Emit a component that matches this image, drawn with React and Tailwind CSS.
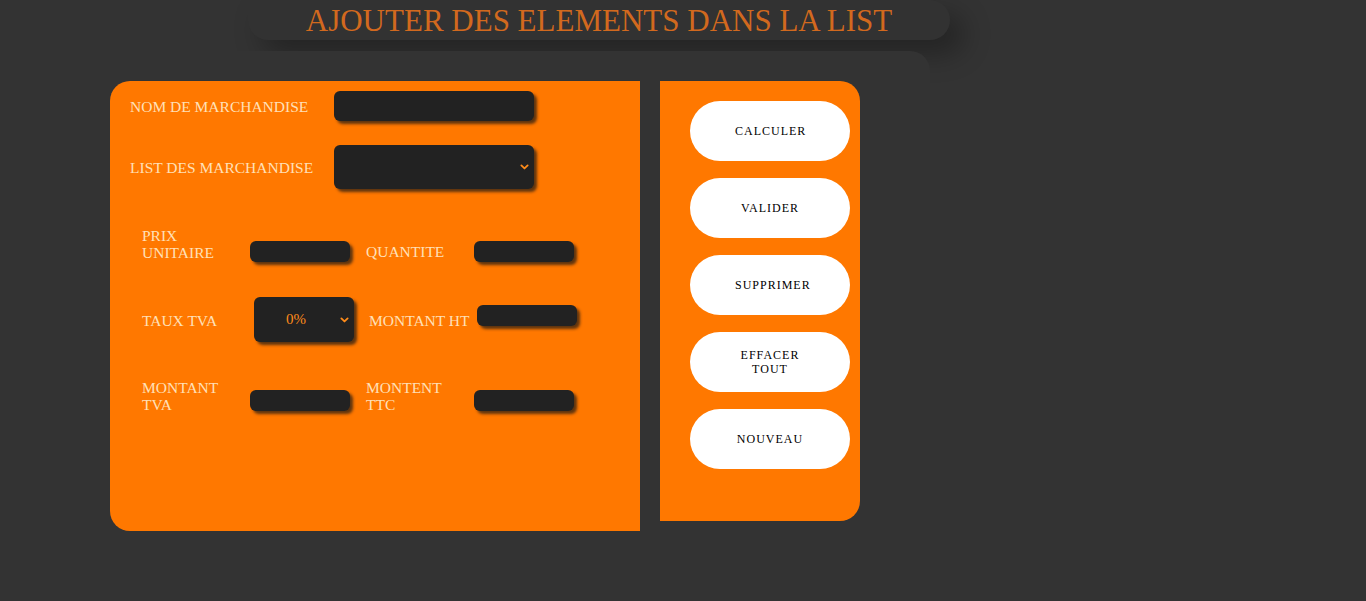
import React from 'react';

const serif = { fontFamily: '"Liberation Serif", "DejaVu Serif", serif' };

const Chevron = ({ className }) => (
  <svg viewBox="0 0 10 6" className={className} fill="none" stroke="currentColor" strokeWidth="2" strokeLinecap="round" strokeLinejoin="round">
    <path d="M1.5 1.2 5 4.6 8.5 1.2" />
  </svg>
);

const Field = ({ className = '' }) => (
  <div className={`bg-[#222222] rounded-[6px] shadow-[3px_3px_3px_rgba(40,30,20,0.75)] ${className}`} />
);

const Label = ({ children, className = '' }) => (
  <span className={`text-[15.5px] leading-[17px] text-[#ffe0b8] ${className}`}>{children}</span>
);

const buttons = ['CALCULER', 'VALIDER', 'SUPPRIMER', 'EFFACER TOUT', 'NOUVEAU'];

export default function App() {
  return (
    <div className="min-h-[601px] bg-[#333333] overflow-hidden" style={serif}>
      {/* Title */}
      <div className="ml-[248px] w-[702px] h-[40px] rounded-b-[20px] rounded-tr-[20px] bg-[#323232] shadow-[14px_14px_28px_rgba(0,0,0,0.3)] flex items-center justify-center">
        <h1 className="text-[31px] leading-none text-[#d2691e] pt-[1px]">AJOUTER DES ELEMENTS DANS LA LIST</h1>
      </div>

      {/* plate */}
      <div className="relative mt-[11px] w-[930px] rounded-tr-[20px] bg-[#333333] pt-[30px] pb-[70px]">
        <div className="flex items-start gap-[20px] ml-[110px]">
          {/* form panel */}
          <div className="w-[530px] h-[450px] bg-[#ff7800] rounded-l-[20px] pt-[10px] pl-[20px]">
            <div className="flex items-center h-[30px]">
              <Label className="w-[204px]">NOM DE MARCHANDISE</Label>
              <Field className="w-[200px] h-[30px]" />
            </div>
            <div className="flex items-center h-[44px] mt-[24px]">
              <Label className="w-[204px]">LIST DES MARCHANDISE</Label>
              <div className="w-[200px] h-[44px] bg-[#222222] rounded-[6px] shadow-[3px_3px_3px_rgba(40,30,20,0.75)] flex items-center justify-end pr-[5px]">
                <Chevron className="w-[9px] h-[6px] text-[#ff8c1a]" />
              </div>
            </div>

            <div className="pl-[12px] mt-[40px]">
              <div className="flex items-center h-[34px]">
                <Label className="w-[108px] mb-[4px]">PRIX<br />UNITAIRE</Label>
                <Field className="w-[100px] h-[21px] mt-[11px]" />
                <Label className="w-[108px] ml-[16px] pt-[11px]">QUANTITE</Label>
                <Field className="w-[100px] h-[21px] mt-[11px]" />
              </div>

              <div className="flex items-center h-[45px] mt-[34px]">
                <Label className="w-[112px] pt-[1px]">TAUX TVA</Label>
                <div className="w-[100px] h-[45px] bg-[#222222] rounded-[6px] shadow-[3px_3px_3px_rgba(40,30,20,0.75)] flex items-center pl-[32px] pr-[5px]">
                  <span className="flex-1 text-[15px] text-[#ff8c1a]">0%</span>
                  <Chevron className="w-[9px] h-[6px] text-[#ff8c1a]" />
                </div>
                <Label className="w-[108px] ml-[15px] pt-[1px]">MONTANT HT</Label>
                <Field className="w-[100px] h-[21px] mb-[8px]" />
              </div>

              <div className="flex items-center h-[34px] mt-[37px]">
                <Label className="w-[108px]">MONTANT<br />TVA</Label>
                <Field className="w-[100px] h-[21px] mt-[8px]" />
                <Label className="w-[108px] ml-[16px]">MONTENT<br />TTC</Label>
                <Field className="w-[100px] h-[21px] mt-[8px]" />
              </div>
            </div>
          </div>

          {/* actions panel */}
          <div className="w-[200px] h-[440px] bg-[#ff7800] rounded-r-[20px] pt-[20px] pl-[30px] flex flex-col gap-[17px]">
            {buttons.map(label => (
              <button
                key={label}
                className="w-[160px] h-[60px] rounded-full bg-white text-black text-[12px] leading-[14px] tracking-[1px] px-[45px] text-center"
                style={serif}
              >
                {label}
              </button>
            ))}
          </div>
        </div>
      </div>
    </div>
  );
}
